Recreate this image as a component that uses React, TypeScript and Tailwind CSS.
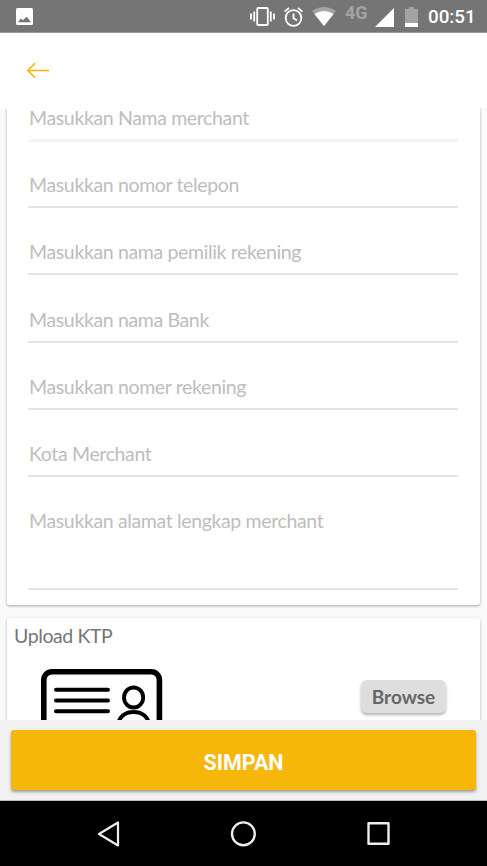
import React from "react";

const fields = [
  "Masukkan nomor telepon",
  "Masukkan nama pemilik rekening",
  "Masukkan nama Bank",
  "Masukkan nomer rekening",
  "Kota Merchant",
];

function StatusBar() {
  return (
    <div className="flex h-[33px] shrink-0 items-start border-b border-[#9a9a9a] bg-[#757575] font-['Roboto',sans-serif] text-white">
      <svg className="ml-4 mt-2 h-[17px] w-[17px]" viewBox="0 0 17 17">
        <rect width="17" height="17" rx="1.5" fill="#fff" />
        <path d="M2 14.2 4.8 10.5l2 1.8L10.8 8.8l4.2 5.4z" fill="#757575" />
      </svg>
      <svg className="ml-auto mt-[7px] h-[19px] w-[25px]" viewBox="0 0 25 19" fill="none" stroke="#fff" strokeWidth="1.8">
        <rect x="7.2" y="1" width="10.6" height="17" rx="1" />
        <path d="M1 6.5v6M4.2 4.5v10M20.8 4.5v10M24 6.5v6" />
      </svg>
      <svg className="ml-[9px] mt-[7px] h-5 w-[19px]" viewBox="0 0 19 20" fill="none" stroke="#fff" strokeWidth="1.8">
        <circle cx="9.5" cy="11" r="7.8" />
        <path d="M.6 4.6 5 1M18.4 4.6 14 1M9.5 6.6V11.3l3.5 2.2" />
      </svg>
      <svg className="ml-[9px] mt-[7px] h-5 w-6" viewBox="0 0 24 20">
        <path d="M0 4Q12-4 24 4L12 19z" fill="#a3a3a3" />
        <path d="M2.4 7Q12 .9 21.6 7L12 19z" fill="#fff" />
      </svg>
      <span className="ml-[9px] mt-[2px] w-[23px] text-[18px] leading-[21px] font-bold text-[#a3a3a3]">4G</span>
      <svg className="ml-[7px] mt-2 h-[19px] w-[19px]" viewBox="0 0 19 19">
        <path d="M19 0v19H0z" fill="#fff" />
      </svg>
      <svg className="ml-[11px] mt-[7px] h-5 w-[13px]" viewBox="0 0 13 20">
        <path d="M4 0h5v2h4v18H0V2h4z" fill="#a3a3a3" />
        <path d="M0 16h13v4H0z" fill="#fff" />
      </svg>
      <span className="ml-[10px] mr-3 mt-[6px] w-[47px] whitespace-nowrap text-[18.8px] leading-[22px] font-medium">00:51</span>
    </div>
  );
}

export default function App() {
  return (
    <div className="flex h-[866px] w-[487px] flex-col overflow-hidden bg-[#fafafa] font-['Lato',sans-serif]">
      <StatusBar />
      <header className="flex h-[75px] shrink-0 items-center bg-white pl-[27px]">
        <svg className="h-4 w-[22px]" viewBox="0 0 22 16" fill="none" stroke="#f7b50a" strokeWidth="1.6">
          <path d="M22 7.5H1M8 .2.9 7.5 8 14.8" />
        </svg>
      </header>

      <main className="flex h-[612px] shrink-0 flex-col overflow-hidden px-[7px]">
        <section className="h-[497px] w-[473px] shrink-0 rounded-b-[3px] bg-white px-[21px] text-[19.5px] leading-6 tracking-[-0.36px] text-[#bdbdbd] shadow-[0_1px_3px_rgba(0,0,0,0.35)]">
          <div className="h-[34px] w-[430px] border-b-[3px] border-[#f4f4f4] pl-px leading-5">
            Masukkan Nama merchant
          </div>
          <div className="-mt-px">
            {fields.map((label) => (
              <div key={label} className="flex h-[67.2px] w-[430px] flex-col justify-end border-b-2 border-[#e4e4e4] pb-[9px] pl-px">
                {label}
              </div>
            ))}
          </div>
          <div className="h-[113px] w-[430px] border-b-2 border-[#e4e4e4] pl-px pt-[32px]">
            Masukkan alamat lengkap merchant
          </div>
        </section>

        <section className="mt-[13px] h-[160px] w-[473px] shrink-0 rounded-[3px] bg-white px-[7px] pt-[6px] shadow-[0_1px_3px_rgba(0,0,0,0.3)]">
          <h2 className="text-[19.5px] leading-6 tracking-[-0.4px] text-[#757575]">Upload KTP</h2>
          <div className="flex justify-between pl-[27px] pr-[27px]">
            <svg className="mt-[20.5px] h-[84px] w-[122px]" viewBox="0 0 122 84" fill="none" stroke="#000">
              <rect x="2.8" y="2.8" width="115.6" height="78" rx="8" strokeWidth="5.6" />
              <path d="M15 20.7h52M15 31.4h52M15 42.2h52M15 53h52" strokeWidth="4" strokeLinecap="round" />
              <ellipse cx="92.6" cy="28.5" rx="9.6" ry="10" strokeWidth="3.8" />
              <path d="M77 58c0-10 7-15 15.6-15s15.6 5 15.6 15" strokeWidth="4" />
            </svg>
            <button className="mt-8 h-[33px] w-[85px] rounded-[6px] bg-[#dedede] text-[19px] leading-[33px] font-bold text-[#666] shadow-[0_2px_3px_rgba(0,0,0,0.3)]">
              Browse
            </button>
          </div>
        </section>
      </main>

      <div className="h-[81px] shrink-0 border-b border-[#bdbdbd] bg-[#f1f1f1] px-[11px] pt-[10px]">
        <button className="h-[60px] w-[465px] rounded-[3px] bg-[#f6b70a] pt-[6px] font-['Roboto',sans-serif] text-[21.5px] font-bold text-white shadow-[0_2px_3px_rgba(0,0,0,0.35)]">
          SIMPAN
        </button>
      </div>

      <nav className="flex h-[65px] shrink-0 items-center bg-black pl-[97px]">
        <svg className="h-[26px] w-[23px]" viewBox="0 0 23 26" fill="none" stroke="#eee" strokeWidth="2.2" strokeLinejoin="round">
          <path d="M21 1.5v23L2 13z" />
        </svg>
        <svg className="ml-[110px] h-[26px] w-[26px]" viewBox="0 0 26 26" fill="none" stroke="#eee" strokeWidth="2.4">
          <circle cx="13.4" cy="12.8" r="11.4" />
        </svg>
        <svg className="ml-[111px] h-[23px] w-[23px]" viewBox="0 0 23 23" fill="none" stroke="#eee" strokeWidth="2.4" strokeLinejoin="round">
          <rect x="1.5" y="1.3" width="20" height="20.4" />
        </svg>
      </nav>
    </div>
  );
}
